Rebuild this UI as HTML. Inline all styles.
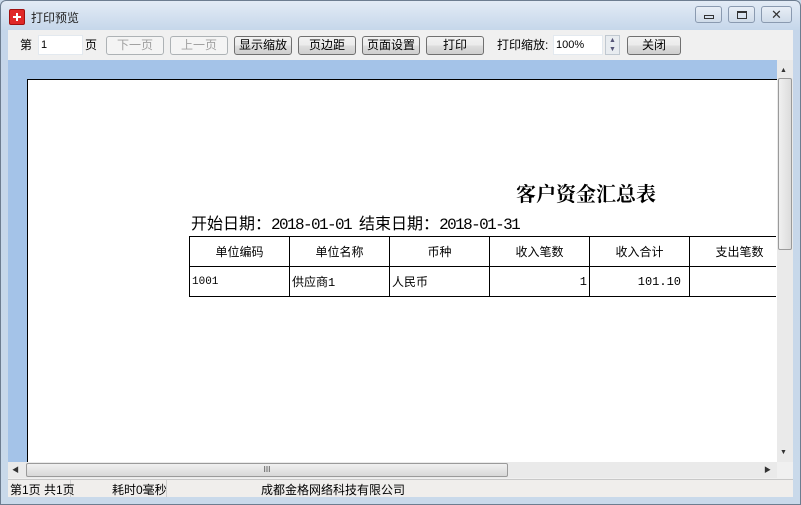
<!DOCTYPE html>
<html><head><meta charset="utf-8"><style>
*{margin:0;padding:0;box-sizing:border-box}
body{width:801px;height:505px;overflow:hidden;background:#c9d9ea;font-family:"Liberation Sans","Noto Sans CJK SC",sans-serif;font-size:12px;color:#000;position:relative}
.abs{position:absolute}
.win{left:0;top:0;width:801px;height:505px;border:1px solid #6d7d90;border-radius:6px 6px 0 0;background:linear-gradient(#e3ebf5,#c5d6ea 30px,#c9d9ea)}
.client{left:8px;top:30px;width:785px;height:467px;background:#f0f0f0}
.btn{position:absolute;top:36px;height:19px;border:1px solid #707070;border-radius:3px;background:linear-gradient(#f2f2f2,#ebebeb 50%,#dddddd 51%,#cfcfcf);text-align:center;line-height:17px;font-size:12px}
.dis{border-color:#adb2b5;background:#f4f4f4;color:#a0a0a0}
.inp{position:absolute;top:35px;height:20px;background:#fff;border:1px solid #e3e9ef;line-height:18px;padding-left:2px;font-size:11px}
.tb{position:absolute;font-size:12px}
.cap{position:absolute;top:6px;width:27px;height:17px;border:1px solid #8a9ab0;border-radius:3px;background:linear-gradient(#e8eef6,#cfdbe9)}
table{border-collapse:collapse;table-layout:fixed;width:601px;position:absolute;left:189px;top:236px;font-family:"Liberation Mono","Noto Sans CJK SC",monospace;font-size:12px}
td{border:1px solid #000;width:100px;height:30px;padding:0 2px;overflow:hidden;white-space:nowrap}
.a{letter-spacing:-1.6px}
</style></head><body>
<div class="abs win"></div>
<div class="abs" style="left:9px;top:9px;width:16px;height:16px;background:#e02828;border-radius:2px;border:1px solid #a01010"><div class="abs" style="left:3px;top:6px;width:8px;height:2px;background:#fff"></div><div class="abs" style="left:6px;top:3px;width:2px;height:8px;background:#fff"></div></div>
<div class="abs" style="left:31px;top:9px;font-size:12px;color:#222">打印预览</div>
<div class="cap" style="left:695px"><div class="abs" style="left:8px;top:8px;width:10px;height:4px;border:1px solid #333"></div></div>
<div class="cap" style="left:728px"><div class="abs" style="left:8px;top:4px;width:10px;height:8px;border:1px solid #333;border-top-width:2px"></div></div>
<div class="cap" style="left:761px;width:31px;text-align:center;line-height:15px;font-size:13px;color:#333">✕</div>
<div class="abs client"></div>
<div class="tb" style="left:20px;top:36px">第</div>
<div class="inp" style="left:38px;width:45px">1</div>
<div class="tb" style="left:85px;top:36px">页</div>
<div class="btn dis" style="left:106px;width:58px">下一页</div>
<div class="btn dis" style="left:170px;width:58px">上一页</div>
<div class="btn" style="left:234px;width:58px">显示缩放</div>
<div class="btn" style="left:298px;width:58px">页边距</div>
<div class="btn" style="left:362px;width:58px">页面设置</div>
<div class="btn" style="left:426px;width:58px">打印</div>
<div class="tb" style="left:497px;top:36px">打印缩放:</div>
<div class="inp" style="left:553px;width:50px">100%</div>
<div class="abs" style="left:605px;top:35px;width:15px;height:20px;border:1px solid #c0c8d0;background:#e8ecf0;font-size:7px;color:#557;text-align:center;line-height:9px">▲<br>▼</div>
<div class="btn" style="left:627px;width:54px">关闭</div>
<div class="abs" style="left:8px;top:60px;width:769px;height:402px;background:#a4c3e8"></div>
<div class="abs" style="left:27px;top:79px;width:750px;height:383px;background:#fff;border-left:1px solid #000;border-top:1px solid #000"></div>
<div class="abs" style="left:516px;top:178px;font-family:'Liberation Serif','Noto Serif CJK SC',serif;font-size:20px;font-weight:bold;white-space:nowrap">客户资金汇总表</div>
<div class="abs" style="left:191px;top:210px;font-family:'Liberation Mono','Noto Sans CJK SC',monospace;font-size:16px;white-space:nowrap">开始日期：<span class="a">2018-01-01 </span>结束日期：<span class="a">2018-01-31</span></div>
<div class="abs" style="left:0;top:0;width:776px;height:462px;overflow:hidden">
<table><tr><td align="center">单位编码</td><td align="center">单位名称</td><td align="center">币种</td><td align="center">收入笔数</td><td align="center">收入合计</td><td align="center">支出笔数</td></tr>
<tr><td style="font-size:11px">1001</td><td>供应商1</td><td>人民币</td><td align="right">1</td><td align="right" style="padding-right:8px">101.10</td><td></td></tr></table></div>
<div class="abs" style="left:777px;top:60px;width:16px;height:402px;background:#eaeaea"></div>
<div class="abs" style="left:780px;top:67px;font-size:7px;color:#333">▲</div>
<div class="abs" style="left:780px;top:449px;font-size:7px;color:#333">▼</div>
<div class="abs" style="left:778px;top:78px;width:14px;height:172px;border:1px solid #9a9a9a;border-radius:2px;background:linear-gradient(90deg,#f0f0f0,#dcdcdc)"></div>
<div class="abs" style="left:8px;top:462px;width:769px;height:16px;background:#eaeaea"></div>
<div class="abs" style="left:12px;top:465px;font-size:7px;color:#333">◀</div>
<div class="abs" style="left:764px;top:465px;font-size:7px;color:#333">▶</div>
<div class="abs" style="left:26px;top:463px;width:482px;height:14px;border:1px solid #9a9a9a;border-radius:2px;background:linear-gradient(#f0f0f0,#d8d8d8);text-align:center;font-size:8px;line-height:12px;color:#444">III</div>
<div class="abs" style="left:777px;top:462px;width:16px;height:16px;background:#f0f0f0"></div>
<div class="abs" style="left:8px;top:479px;width:785px;height:18px;background:#f0eeec;border-top:1px solid #c8c8c8"></div>
<div class="abs" style="left:70px;top:480px;width:1px;height:17px;background:#d0d0d0"></div>
<div class="abs" style="left:166px;top:480px;width:1px;height:17px;background:#d0d0d0"></div>
<div class="tb" style="left:10px;top:481px">第1页 共1页</div>
<div class="tb" style="left:112px;top:481px">耗时0毫秒</div>
<div class="tb" style="left:261px;top:481px">成都金格网络科技有限公司</div>
</body></html>
